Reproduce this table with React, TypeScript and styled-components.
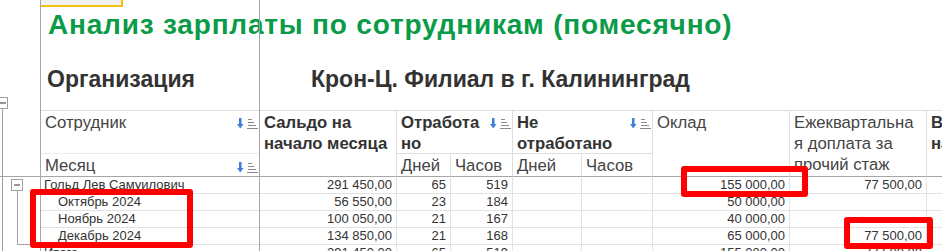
import React from "react";
import styled, { createGlobalStyle } from "styled-components";

const GlobalStyle = createGlobalStyle`
  html, body {
    margin: 0;
    padding: 0;
    background: #fff;
  }
  body {
    font-family: "Liberation Sans", Arial, sans-serif;
  }
`;

const COLS = "219px 137px 54px 62px 69px 71px 137px 137px 160px";

type Row = {
  name: string;
  sub?: boolean;
  saldo: string;
  days: string;
  hours: string;
  oklad: string;
  bonus: string;
};

const rows: Row[] = [
  { name: "Гольд Лев Самуилович", saldo: "291 450,00", days: "65", hours: "519", oklad: "155 000,00", bonus: "77 500,00" },
  { name: "Октябрь 2024", sub: true, saldo: "56 550,00", days: "23", hours: "184", oklad: "50 000,00", bonus: "" },
  { name: "Ноябрь 2024", sub: true, saldo: "100 050,00", days: "21", hours: "167", oklad: "40 000,00", bonus: "" },
  { name: "Декабрь 2024", sub: true, saldo: "134 850,00", days: "21", hours: "168", oklad: "65 000,00", bonus: "77 500,00" },
  { name: "Итого", saldo: "291 450,00", days: "65", hours: "519", oklad: "155 000,00", bonus: "77 500,00" },
];

const SortIcon = () => (
  <svg width="21" height="12" viewBox="0 0 21 12">
    <rect x="2" y="0" width="2.5" height="7" fill="#3b7dd8" />
    <polygon points="0,6 6.5,6 3.25,10.5" fill="#3b7dd8" />
    <g stroke="#8a8a8a" strokeWidth="1">
      <line x1="11" y1="1.5" x2="15" y2="1.5" />
      <line x1="11" y1="4.5" x2="17" y2="4.5" />
      <line x1="11" y1="7.5" x2="19" y2="7.5" />
      <line x1="10" y1="10.5" x2="21" y2="10.5" />
    </g>
  </svg>
);

const OutlineTree = () => (
  <svg width="40" height="251" viewBox="0 0 40 251">
    <line x1="0" y1="176.5" x2="40" y2="176.5" stroke="#a6a6a6" />
    <line x1="2.5" y1="108" x2="2.5" y2="251" stroke="#a0a0a0" />
    <rect x="-3.5" y="97.5" width="11" height="11" fill="#fff" stroke="#a0a0a0" />
    <line x1="-1" y1="103" x2="6" y2="103" stroke="#333" />
    <line x1="17.5" y1="190" x2="17.5" y2="244.5" stroke="#a0a0a0" />
    <line x1="17.5" y1="244.5" x2="40" y2="244.5" stroke="#a0a0a0" />
    <rect x="11.5" y="179.5" width="11" height="11" fill="#fff" stroke="#a0a0a0" />
    <line x1="14" y1="185" x2="20" y2="185" stroke="#333" />
  </svg>
);

export default function App() {
  return (
    <>
      <GlobalStyle />
      <Page>
        <Gutter>
          <OutlineTree />
        </Gutter>
        <Sheet>
          <TopCell />
          <Title>Анализ зарплаты по сотрудникам (помесячно)</Title>
          <OrgRow>
            <OrgLabel>Организация</OrgLabel>
            <OrgValue>Крон-Ц. Филиал в г. Калининград</OrgValue>
          </OrgRow>

          <Header>
            <HeadCell $line="faint">
              <span>Сотрудник</span>
              <SortIcon />
            </HeadCell>
            <HeadCell $rows={2} $bold>
              <span>
                Сальдо на
                <br />
                начало месяца
              </span>
            </HeadCell>
            <HeadCell $cols={2} $bold $line="light">
              <span>
                Отработа
                <br />
                но
              </span>
              <SortIcon />
            </HeadCell>
            <HeadCell $cols={2} $bold $line="light">
              <span>
                Не
                <br />
                отработано
              </span>
              <SortIcon />
            </HeadCell>
            <HeadCell $rows={2}>
              <span>Оклад</span>
            </HeadCell>
            <HeadCell $rows={2}>
              <span>
                Ежеквартальна
                <br />я доплата за
                <br />
                прочий стаж
              </span>
            </HeadCell>
            <HeadCell $rows={2} $bold>
              <span>
                Выплачено
                <br />
                на руки
              </span>
            </HeadCell>

            <HeadCell $sub>
              <span>Месяц</span>
              <SortIcon />
            </HeadCell>
            <HeadCell $sub>Дней</HeadCell>
            <HeadCell $sub>Часов</HeadCell>
            <HeadCell $sub>Дней</HeadCell>
            <HeadCell $sub>Часов</HeadCell>
          </Header>

          {rows.map((r, i) => (
            <DataRow key={i}>
              <DataCell $indent={r.sub ? 17 : 3}>{r.name}</DataCell>
              <DataCell $num>{r.saldo}</DataCell>
              <DataCell $num>{r.days}</DataCell>
              <DataCell $num>{r.hours}</DataCell>
              <DataCell $num />
              <DataCell $num />
              <DataCell $num>{r.oklad}</DataCell>
              <DataCell $num>{r.bonus}</DataCell>
              <DataCell />
            </DataRow>
          ))}
        </Sheet>

        <Marker $x={30} $y={189} $w={163} $h={59} />
        <Marker $x={681} $y={166} $w={127} $h={31} />
        <Marker $x={844} $y={217} $w={89} $h={32} />
      </Page>
    </>
  );
}

const Page = styled.div`
  position: relative;
  display: flex;
  width: 942px;
  height: 251px;
  overflow: hidden;
  background: #fff;
  font-family: "Liberation Sans", Arial, sans-serif;
`;

const Gutter = styled.div`
  flex: 0 0 40px;
  height: 251px;

  svg {
    display: block;
    overflow: visible;
  }
`;

const Sheet = styled.div`
  position: relative;
  flex: 0 0 auto;
  width: 1000px;
  border-left: 1px solid #a6a6a6;

  &::after {
    content: "";
    position: absolute;
    left: 218px;
    top: 0;
    bottom: 0;
    width: 1px;
    background: #a6a6a6;
  }
`;

const TopCell = styled.div`
  box-sizing: border-box;
  width: 82px;
  height: 7px;
  background: #f2f2f2;
  border-right: 2px solid #f4c20d;
  border-bottom: 2px solid #f4c20d;
`;

const Title = styled.div`
  height: 41px;
  padding: 3px 0 0 7px;
  font-size: 28px;
  line-height: 30px;
  letter-spacing: 0.8px;
  font-weight: bold;
  color: #0a9b48;
  white-space: nowrap;
`;

const OrgRow = styled.div`
  display: flex;
  height: 44px;
  padding-top: 15px;
  font-size: 23px;
  line-height: 26px;
  font-weight: bold;
  color: #333;
  white-space: nowrap;
`;

const OrgLabel = styled.div`
  width: 264px;
  padding-left: 6px;
`;

const OrgValue = styled.div``;

const Header = styled.div`
  display: grid;
  grid-template-columns: ${COLS};
  grid-template-rows: 43px 23px;
  border-top: 1px solid #dedede;
`;

const HeadCell = styled.div<{
  $bold?: boolean;
  $cols?: number;
  $rows?: number;
  $sub?: boolean;
  $line?: "light" | "faint";
}>`
  box-sizing: border-box;
  grid-column: span ${(p) => p.$cols ?? 1};
  grid-row: span ${(p) => p.$rows ?? 1};
  display: flex;
  justify-content: space-between;
  align-items: flex-start;
  padding: 1px 1px 0 4px;
  border-right: 1px solid #dedede;
  border-bottom: 1px solid
    ${(p) => (p.$line === "light" ? "#dedede" : p.$line === "faint" ? "#ececec" : "#a6a6a6")};
  font-size: 16.7px;
  line-height: 21px;
  font-weight: ${(p) => (p.$bold ? "bold" : "normal")};
  color: ${(p) => (p.$bold ? "#333" : "#444")};
  white-space: nowrap;
  overflow: hidden;

  svg {
    flex: 0 0 auto;
    margin-top: ${(p) => (p.$sub ? 7 : 6)}px;
  }
`;

const DataRow = styled.div`
  display: grid;
  grid-template-columns: ${COLS};
  height: 17px;
`;

const DataCell = styled.div<{ $num?: boolean; $indent?: number }>`
  box-sizing: border-box;
  height: 17px;
  padding: 0 4px 0 ${(p) => p.$indent ?? 4}px;
  border-right: 1px solid #e2e2e2;
  border-bottom: 1px solid #e2e2e2;
  font-size: 13px;
  line-height: 16px;
  color: #333;
  text-align: ${(p) => (p.$num ? "right" : "left")};
  white-space: nowrap;
  overflow: hidden;
`;

const Marker = styled.div<{ $x: number; $y: number; $w: number; $h: number }>`
  position: absolute;
  left: ${(p) => p.$x}px;
  top: ${(p) => p.$y}px;
  width: ${(p) => p.$w}px;
  height: ${(p) => p.$h}px;
  box-sizing: border-box;
  border: 6px solid #ff0000;
  border-radius: 3px;
  pointer-events: none;
`;
